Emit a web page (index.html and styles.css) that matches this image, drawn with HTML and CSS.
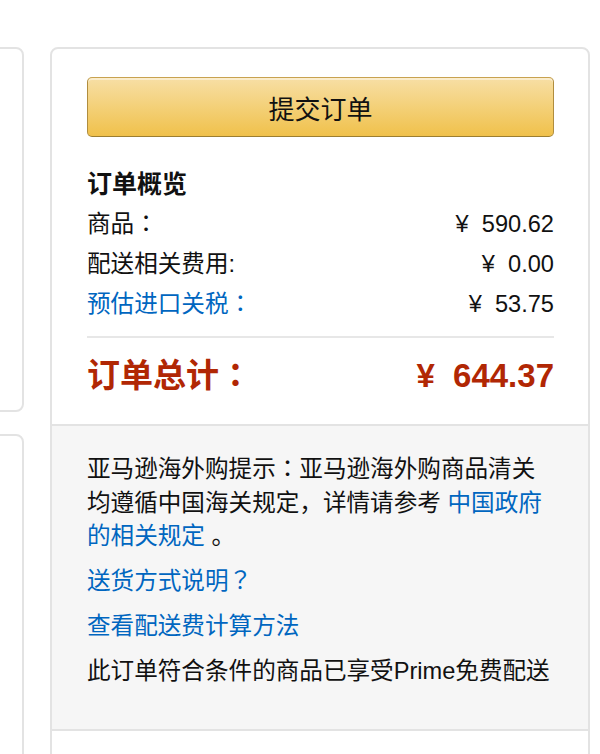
FILE: index.html
```html
<!DOCTYPE html>
<html lang="zh-CN">
<head>
<meta charset="utf-8">
<title>订单概览</title>
<link rel="stylesheet" href="styles.css">
</head>
<body>
<div class="page">
  <div class="left-col">
    <div class="side-card side-card-top"></div>
    <div class="side-card side-card-bottom"></div>
  </div>
  <div class="summary-card">
    <div class="summary-main">
      <button class="place-order" type="button">提交订单</button>
      <h4 class="summary-title">订单概览</h4>
      <div class="row"><span class="label">商品<span class="punct" lang="ja">：</span></span><span class="amount">¥&nbsp; 590.62</span></div>
      <div class="row"><span class="label">配送相关费用:</span><span class="amount">¥&nbsp; 0.00</span></div>
      <div class="row"><a class="label link" href="#">预估进口关税<span class="punct" lang="ja">：</span></a><span class="amount">¥&nbsp; 53.75</span></div>
      <hr class="divider">
      <div class="row total"><span class="label">订单总计<span class="punct" lang="ja">：</span></span><span class="amount">¥&nbsp; 644.37</span></div>
    </div>
    <div class="summary-notes">
      <p class="note">亚马逊海外购提示<span class="punct" lang="ja">：</span>亚马逊海外购商品清关均遵循中国海关规定<span class="punct" lang="ja">，</span>详情请参考 <a class="link" href="#">中国政府的相关规定</a> <span class="punct" lang="ja">。</span></p>
      <p class="note"><a class="link" href="#">送货方式说明<span class="punct" lang="ja">？</span></a></p>
      <p class="note"><a class="link" href="#">查看配送费计算方法</a></p>
      <p class="note">此订单符合条件的商品已享受Prime免费配送</p>
    </div>
    <div class="summary-foot"></div>
  </div>
</div>
</body>
</html>
```

FILE: styles.css
```css
html, body {
  margin: 0;
  padding: 0;
  background: #ffffff;
}

body {
  font-family: "Liberation Sans", "Noto Sans CJK SC", sans-serif;
  color: #111111;
  font-size: 23.6px;
  overflow: hidden;
  height: 754px;
}

.page {
  display: flex;
  align-items: flex-start;
  gap: 26px;
  padding-top: 47px;
  height: 754px;
  box-sizing: border-box;
  overflow: hidden;
}

.left-col {
  width: 44px;
  margin-left: -20px;
  display: flex;
  flex-direction: column;
  gap: 22px;
  flex: none;
}

.side-card {
  border: 2px solid #e3e3e3;
  border-radius: 8px;
  box-sizing: border-box;
}

.side-card-top {
  height: 365px;
}

.side-card-bottom {
  height: 330px;
}

.summary-card {
  width: 540px;
  flex: none;
  border: 2px solid #e3e3e3;
  border-radius: 8px;
  box-sizing: border-box;
  overflow: hidden;
  height: 720px;
}

.summary-main {
  padding: 28px 34px 28px 35px;
}

.place-order {
  display: block;
  width: 100%;
  height: 60px;
  border: 1px solid;
  border-color: #c8a250 #b08d3e #9c7e31;
  border-radius: 5px;
  background: linear-gradient(to bottom, #f7dfa5, #f0c14b);
  box-shadow: inset 0 2px 0 rgba(255, 255, 255, 0.45);
  font-family: "Liberation Sans", "Noto Sans CJK SC", sans-serif;
  font-size: 26px;
  color: #111111;
  padding: 0;
  cursor: pointer;
}

.summary-title {
  margin: 30px 0 3px;
  font-size: 25px;
  line-height: 34px;
  font-weight: bold;
}

.row {
  display: flex;
  justify-content: space-between;
  align-items: center;
  height: 40px;
  line-height: 40px;
}

.punct {
  font-family: "Noto Sans CJK JP", "Noto Sans CJK SC", sans-serif;
  line-height: 0;
}

.link {
  color: #0066c0;
  text-decoration: none;
}

.divider {
  border: 0;
  border-top: 2px solid #e7e7e7;
  margin: 12px 0 18px;
}

.total {
  color: #b12704;
  font-weight: bold;
  font-size: 33px;
}

.summary-notes {
  background: #f6f6f6;
  border-top: 2px solid #e3e3e3;
  border-bottom: 2px solid #e3e3e3;
  padding: 27px 34px 40px 35px;
}

.note {
  margin: 0 0 11.5px;
  line-height: 33.6px;
}

.note:last-child {
  margin-bottom: 0;
}

.summary-foot {
  height: 40px;
}
```
